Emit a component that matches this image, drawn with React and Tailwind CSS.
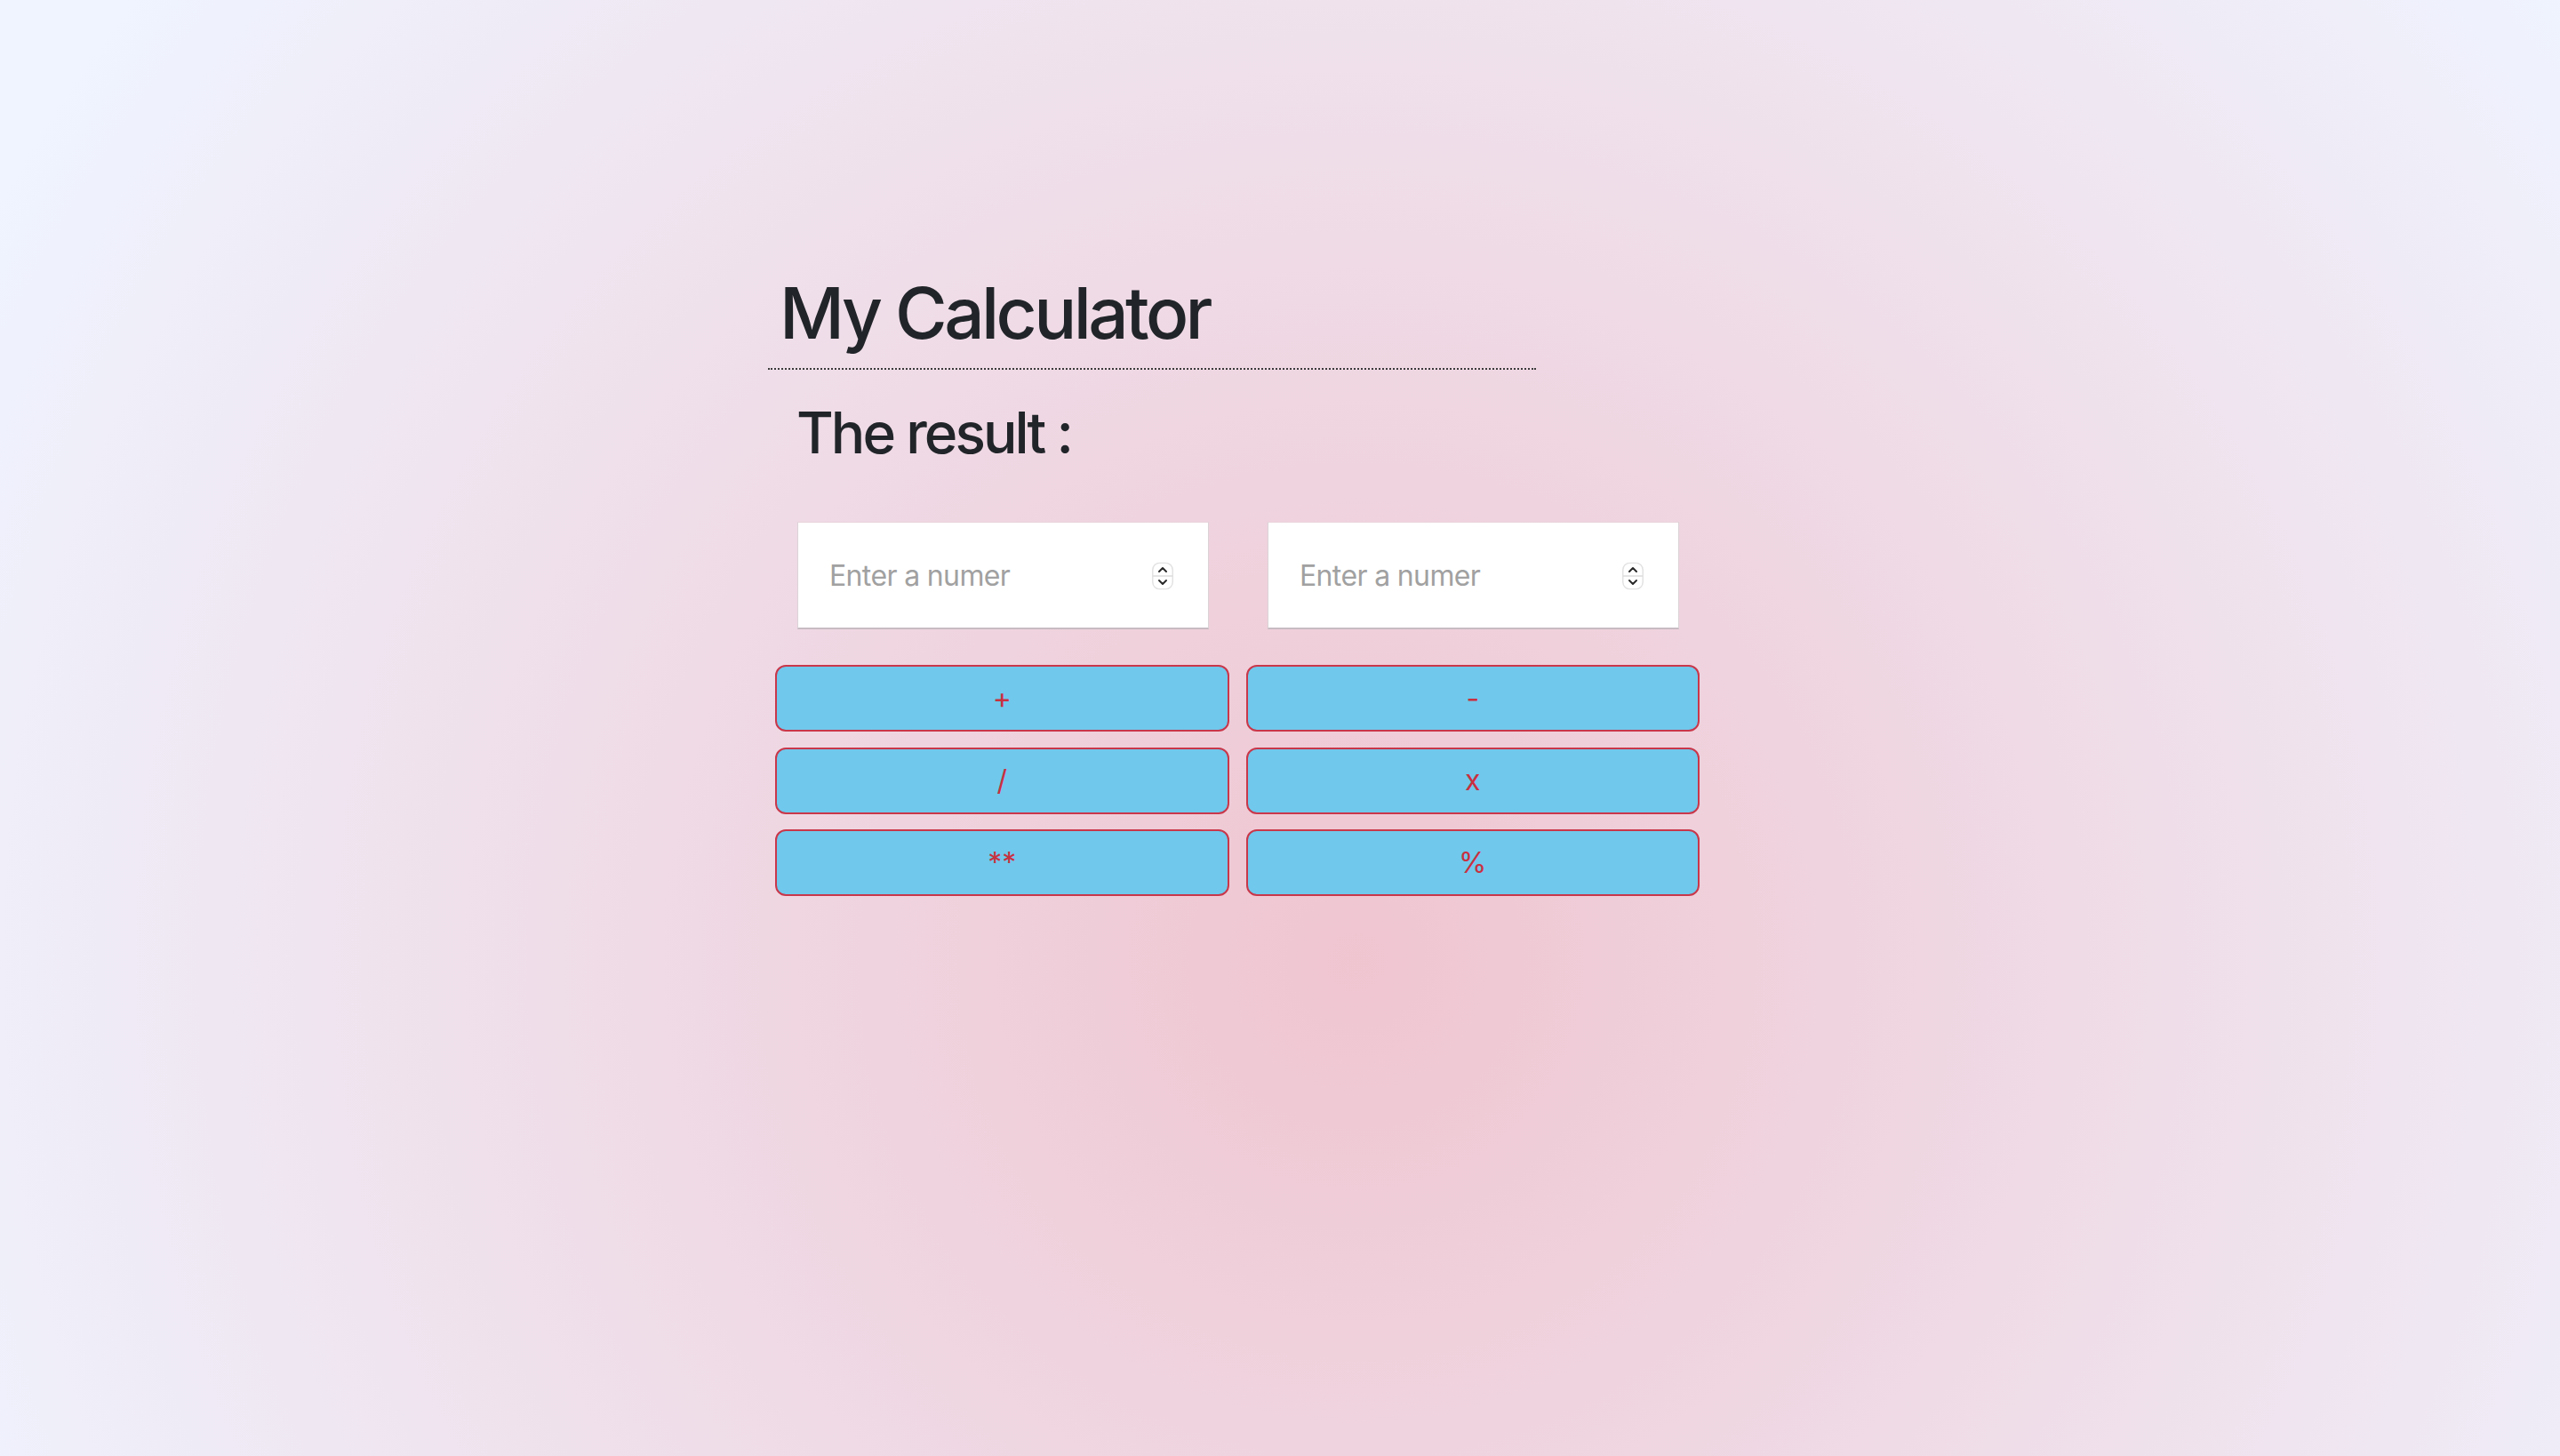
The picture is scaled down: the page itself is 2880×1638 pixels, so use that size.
import { useState } from 'react';

const OPS = ['+', '-', '/', 'x', '**', '%'];

function Spinner() {
  return (
    <svg
      className="absolute right-[40px] top-1/2 -translate-y-1/2 pointer-events-none"
      width="24"
      height="31"
      viewBox="0 0 24 31"
    >
      <rect x="0.75" y="0.75" width="22.5" height="29.5" rx="8" fill="#fff" stroke="#e2e2e2" strokeWidth="1.5" />
      <line x1="1" y1="15.5" x2="23" y2="15.5" stroke="#dcdcdc" strokeWidth="1.5" />
      <path d="M8 10.5 L12 6.5 L16 10.5" fill="none" stroke="#2a2a2a" strokeWidth="2" strokeLinecap="round" strokeLinejoin="round" />
      <path d="M8 20.5 L12 24.5 L16 20.5" fill="none" stroke="#2a2a2a" strokeWidth="2" strokeLinecap="round" strokeLinejoin="round" />
    </svg>
  );
}

function NumberField({ value, onChange }) {
  return (
    <div className="relative w-[463px] h-[121px]">
      <input
        type="number"
        value={value}
        onChange={e => onChange(e.target.value)}
        placeholder="Enter a numer"
        className="w-full h-full bg-white pl-[35px] pr-[80px] text-[32px] tracking-[-0.02em] text-[#212529] placeholder:text-[#a1a1a1] outline-none border border-[#dcd3d7] border-t-[#e9d3db] border-b-2 border-b-[#c8bcc2] [appearance:textfield] [&::-webkit-inner-spin-button]:appearance-none [&::-webkit-outer-spin-button]:appearance-none"
        style={{ fontFamily: 'Inter, "Liberation Sans", sans-serif' }}
      />
      <Spinner />
    </div>
  );
}

export default function App() {
  const [a, setA] = useState('');
  const [b, setB] = useState('');
  const [result, setResult] = useState('');

  const calc = op => {
    const x = parseFloat(a);
    const y = parseFloat(b);
    if (isNaN(x) || isNaN(y)) return;
    const r = {
      '+': x + y,
      '-': x - y,
      '/': x / y,
      'x': x * y,
      '**': x ** y,
      '%': x % y,
    }[op];
    setResult(r);
  };

  return (
    <div
      className="min-h-screen w-full pt-[304px] bg-[radial-gradient(circle_1750px_at_53%_66%,#efc5d0_0%,#eff4ff_100%)] text-[#212529]"
      style={{ fontFamily: 'Inter, "Liberation Sans", sans-serif' }}
    >
      <div className="ml-[864px] w-[1048px] flex flex-col">
        <h1 className="w-[864px] pl-[13px] pb-[14px] text-[80px] leading-[96px] font-medium tracking-[-0.045em] border-b-2 border-dotted border-[#3b3b3b]">
          My Calculator
        </h1>

        <h2 className="mt-[32px] pl-[32px] text-[64px] leading-[77px] font-medium tracking-[-0.046em]">
          The result : {result}
        </h2>

        {/* inputs */}
        <div className="mt-[62px] pl-[33px] flex gap-[66px]">
          <NumberField value={a} onChange={setA} />
          <NumberField value={b} onChange={setB} />
        </div>

        {/* operators */}
        <div className="mt-[40px] ml-[8px] w-[1040px] grid grid-cols-2 gap-x-[19px] gap-y-[17.5px]">
          {OPS.map(op => (
            <button
              key={op}
              onClick={() => calc(op)}
              className="h-[75px] rounded-[12px] border-2 border-[#c9374a] bg-[#70c8ec] text-[32px] text-[#c9303f] leading-none"
            >
              {op}
            </button>
          ))}
        </div>
      </div>
    </div>
  );
}
